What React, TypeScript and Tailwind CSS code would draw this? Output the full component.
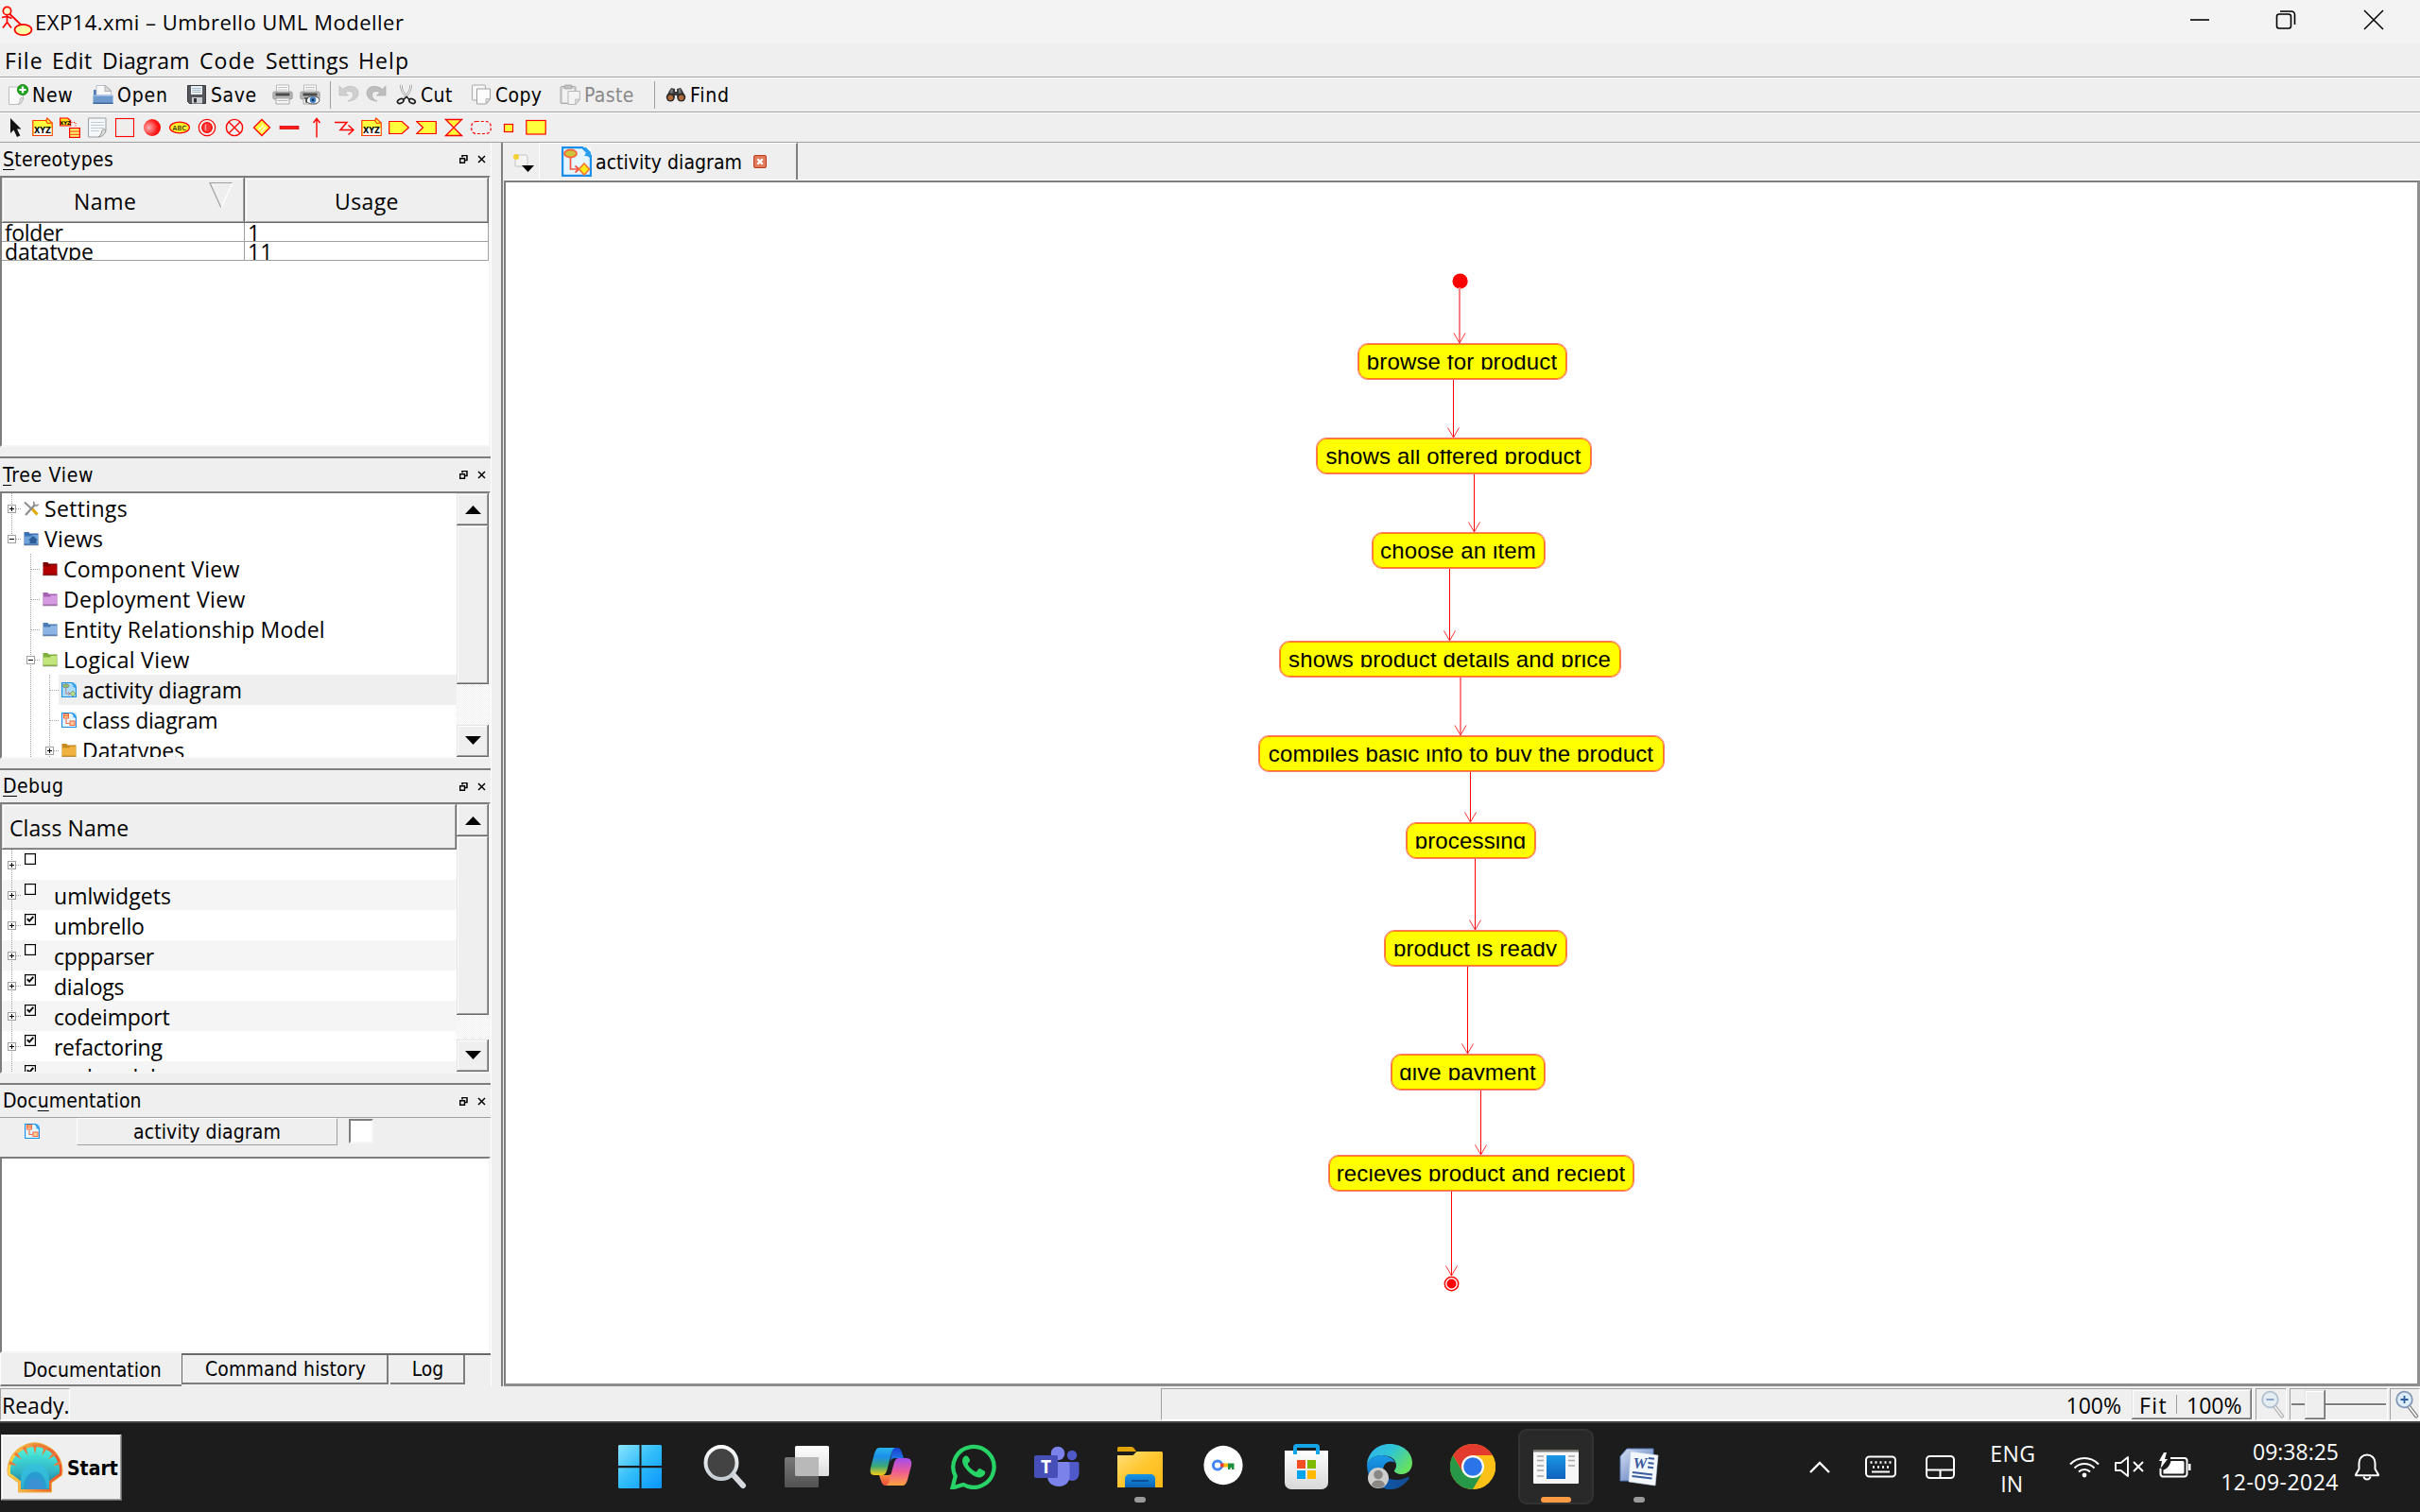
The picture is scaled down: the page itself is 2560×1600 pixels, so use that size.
import type { ReactNode } from "react";

const UI = "font-['Open_Sans','Noto_Sans',sans-serif]";
const TAHOMA = "font-['DejaVu_Sans_Condensed','DejaVu_Sans',sans-serif]";
const RAISED =
  "bg-[#efefef] shadow-[inset_-1px_-1px_0_#696969,inset_1px_1px_0_#e3e3e3,inset_-2px_-2px_0_#a0a0a0,inset_2px_2px_0_#ffffff]";
const SUNKEN =
  "border-l-2 border-t-2 border-r-2 border-b-2 border-l-[#7d7d7d] border-t-[#7d7d7d] border-r-[#f5f5f5] border-b-[#f5f5f5] bg-white";

/* ---------- toolbar icons (22 x 22) ---------- */

function Ico({ children, size = 22 }: { children: ReactNode; size?: number }) {
  return (
    <svg width={size} height={size} viewBox="0 0 22 22" className="shrink-0" fill="none">
      {children}
    </svg>
  );
}

const NewIcon = () => (
  <Ico>
    <path d="M1.500 3h15v12l-5 6.500h-10z" fill="#fafafa" stroke="#bdbdbd" />
    <path d="M16.500 15c-2-1-4 0-3.500 2 .3 2-.5 3.500-1.500 4.500 3-.5 4.500-3 5-6.500z" fill="#e2e2e2" stroke="#a8a8a8" strokeWidth=".8" />
    <circle cx="16" cy="6" r="5.600" fill="#1fa51f" stroke="#0c7d0c" strokeWidth=".8" />
    <path d="M16 2.500v7M12.500 6h7" stroke="#fff" strokeWidth="2.200" />
  </Ico>
);
const OpenIcon = () => (
  <Ico>
    <path d="M1 18V6h4v-3h2v12z" fill="#4f7db5" />
    <path d="M4 12V1.500h9.500l6 5V12z" fill="#f8f8f8" stroke="#a9b4c2" strokeWidth=".8" />
    <path d="M13 1.500v6h6.500z" fill="#dcdcdc" stroke="#9a9a9a" strokeWidth=".7" />
    <path d="M.5 12h21v8.500H.5z" fill="#6d99cc" />
    <path d="M.5 11.500h21v1.500H.5z" fill="#9dbde2" />
    <path d="M.5 19.500h21v1.500H.5z" fill="#3f699e" />
  </Ico>
);
const SaveIcon = () => (
  <Ico>
    <path d="M1.500 1.500h19v19h-17l-2-2z" fill="#56575c" stroke="#38393d" />
    <path d="M5 2h12v9H5z" fill="#e9eef2" />
    <path d="M6.500 4.500h9M6.500 6.500h9M6.500 8.500h9" stroke="#9fb4c2" strokeWidth=".9" />
    <path d="M6 14h11v6.500H6z" fill="#c9ccd0" />
    <path d="M8 15h3v4.500H8z" fill="#2f3034" />
  </Ico>
);
const PrintIcon = ({ preview = false }: { preview?: boolean }) => (
  <Ico>
    <path d="M4.500 1h13v9h-13z" fill="#fdfdfd" stroke="#aaa" strokeWidth=".8" />
    <path d="M6 3.500h10M6 6h10" stroke="#b9b9b9" strokeWidth=".9" />
    <rect x=".8" y="8" width="20.400" height="8" rx="1.500" fill="#b7b7b7" stroke="#898989" strokeWidth=".7" />
    <path d="M3.500 9.500h15v3h-15z" fill="#4b4b4b" />
    <path d="M4 15h14v6H4z" fill="#f6f6f6" stroke="#999" strokeWidth=".8" />
    <path d="M5.500 17.500h11" stroke="#bbb" />
    {preview && (
      <>
        <ellipse cx="14" cy="17" rx="7" ry="4" fill="#f8fbff" stroke="#444" strokeWidth=".9" />
        <circle cx="14" cy="16.800" r="3.300" fill="#3f7fc4" />
        <circle cx="14" cy="16.800" r="1.400" fill="#0e2c52" />
        <path d="M5 15h4M7 15v5" stroke="#222" strokeWidth="1.200" />
      </>
    )}
  </Ico>
);
const UndoIcon = ({ flip = false }: { flip?: boolean }) => (
  <Ico>
    <g transform={flip ? "translate(22 0) scale(-1 1)" : undefined}>
      <path
        d="M1 2v10h9.500l-3.500-3.200c3-2.300 8-1.800 8.500 2.200.3 3-2 5.500-5.500 7 6-.2 11-3 11-8.500 0-7.500-10-9.500-16.500-4z"
        fill={flip ? "#bdbdbd" : "#cfcfcf"}
        stroke={flip ? "#a9a9a9" : "#bcbcbc"}
        strokeWidth=".7"
      />
    </g>
  </Ico>
);
const CutIcon = () => (
  <Ico>
    <path d="M5.500 1c-.5 4 2 9 6.500 13.500M15.500 1c.5 4-2 9-6.500 13.500" stroke="#8a8a8a" strokeWidth="2.400" />
    <path d="M5.500 1c-.5 4 2 9 6.500 13.500M15.500 1c.5 4-2 9-6.500 13.500" stroke="#f3f3f3" strokeWidth="1.100" />
    <ellipse cx="4.700" cy="18" rx="3.400" ry="2.300" transform="rotate(-25 4.700 18)" stroke="#1b1b1b" strokeWidth="1.700" />
    <ellipse cx="17" cy="18" rx="3.400" ry="2.300" transform="rotate(25 17 18)" stroke="#1b1b1b" strokeWidth="1.700" />
    <path d="M8 16.500l3-3.200 3 3.200" stroke="#1b1b1b" strokeWidth="1.500" />
  </Ico>
);
const CopyIcon = () => (
  <Ico>
    <rect x="1.500" y="1" width="14" height="16" rx="1" fill="#f6f6f6" stroke="#a9a9a9" />
    <path d="M6.500 5h14v11l-4 5h-10z" fill="#fcfcfc" stroke="#a0a0a0" />
    <path d="M20.500 15.500h-4.500v5z" fill="#ddd" stroke="#aaa" strokeWidth=".7" />
  </Ico>
);
const PasteIcon = () => (
  <Ico>
    <rect x="1" y="2.500" width="16" height="18" rx="1" fill="#d3d3d3" stroke="#a8a8a8" />
    <rect x="3" y="5" width="12" height="14" fill="#f2f2f2" />
    <rect x="5" y="1" width="8" height="4" rx="1" fill="#c2c2c2" stroke="#999" strokeWidth=".7" />
    <path d="M9 7.500h12.300v9l-4 5H9z" fill="#f3f3f3" stroke="#b5b5b5" />
    <path d="M21 16h-4.500v5z" fill="#ddd" stroke="#b5b5b5" strokeWidth=".7" />
  </Ico>
);
const FindIcon = () => (
  <Ico>
    <path d="M6 4l4 1v3h2V5l4-1 2 3 3.500 7h-9l-.5-2h-2l-.5 2h-9L4 7z" fill="#3c3c3c" />
    <path d="M6 5l2 1-1 5-3 1zM15.500 5l-2 1 1 5 3 1z" fill="#7d7d7d" />
    <circle cx="5.300" cy="14" r="4.500" fill="#2b2b2b" />
    <circle cx="16.700" cy="14" r="4.500" fill="#2b2b2b" />
    <circle cx="5.300" cy="14.300" r="2.800" fill="#b26a3a" />
    <circle cx="16.700" cy="14.300" r="2.800" fill="#b26a3a" />
  </Ico>
);

const XyzIcon = () => (
  <Ico>
    <path d="M.8 3.500h14l1-2.500 5.400 5v13.500H.8z" fill="#ffff3c" stroke="#ff3a00" strokeWidth="1.200" />
    <path d="M2 11.500h18.500V19H2z" fill="#fff" />
    <path d="M14.500 3.500l2 3 4-.3" stroke="#ff3a00" strokeWidth="1.200" />
    <text x="11" y="16.800" fontSize="8.400" fontWeight="bold" textAnchor="middle" fill="#000" fontFamily="DejaVu Sans" textLength="18" lengthAdjust="spacingAndGlyphs">
      XYZ
    </text>
  </Ico>
);

const DRAW_TOOLS: ReactNode[] = [
  <Ico>
    <path d="M6 1v16l3.500-3.500L13 21l3.300-1.600L13 12.500h4.500z" fill="#111" />
  </Ico>,
  <XyzIcon />,
  <Ico>
    <path d="M.6 1h8l3 2.500V9H.6z" fill="#ffe11e" stroke="#f00" strokeWidth="1.200" />
    <text x="6" y="7.600" fontSize="5.200" fontWeight="bold" textAnchor="middle" fill="#000" fontFamily="DejaVu Sans">XYZ</text>
    <path d="M12.500 5.500h4.500v5" stroke="#f00" strokeDasharray="1 1.500" />
    <rect x="10.600" y="11.600" width="10.800" height="9.800" fill="#fff36b" stroke="#f00" strokeWidth="1.200" />
    <path d="M11 15h10M11 18.300h10" stroke="#f00" strokeWidth=".8" />
  </Ico>,
  <Ico>
    <path d="M1.500 1h18.500v12.500L12 21H1.500z" fill="#f5f7f9" stroke="#9a9fa3" />
    <path d="M4 5.500h14M4 8.500h14M4 11.500h14M4 14.500h9" stroke="#c0ccd6" />
    <path d="M20 13.500c-3-1.500-5 0-4.500 2.500-1 3-2 4-3.500 5 4 0 8-3.500 8-7.500z" fill="#dadada" stroke="#888" strokeWidth=".8" />
  </Ico>,
  <Ico>
    <rect x="1.500" y="1.500" width="19" height="19" stroke="#f00" strokeWidth="1.100" fill="#f0eded" />
  </Ico>,
  <Ico>
    <defs>
      <radialGradient id="ballGrad" cx=".3" cy=".5" r=".75">
        <stop offset="0" stopColor="#ffb0b0" />
        <stop offset=".7" stopColor="#ff1515" />
        <stop offset="1" stopColor="#f00" />
      </radialGradient>
    </defs>
    <circle cx="11" cy="11" r="9" fill="url(#ballGrad)" />
  </Ico>,
  <Ico>
    <ellipse cx="11" cy="11" rx="10.400" ry="5.800" fill="#ffee2e" stroke="#f00" strokeWidth="1.200" />
    <text x="11" y="13.600" fontSize="7" textAnchor="middle" fill="#000" fontFamily="DejaVu Sans" textLength="15">ABC</text>
  </Ico>,
  <Ico>
    <circle cx="11" cy="11" r="8.700" stroke="#f00" strokeWidth="1.200" />
    <circle cx="11" cy="11" r="5.300" fill="#ff3434" stroke="#f00" strokeWidth="1.200" />
    <path d="M9.500 7.500v7" stroke="#ff9d9d" strokeWidth="1.500" />
  </Ico>,
  <Ico>
    <circle cx="11" cy="11" r="8.600" stroke="#f00" strokeWidth="1.400" />
    <path d="M5 5l12 12M17 5L5 17" stroke="#f00" strokeWidth="1.400" />
  </Ico>,
  <Ico>
    <path d="M11 2.500l8.500 8.500L11 19.500 2.500 11z" fill="#ffff3c" stroke="#f00" strokeWidth="1.300" />
    <path d="M7.500 13.500l5-5M10 15.500l5-5" stroke="#fff" strokeWidth="1.300" />
  </Ico>,
  <Ico>
    <rect x="1" y="9.300" width="20" height="3.400" fill="#ff1a1a" stroke="#c00" strokeWidth=".6" />
  </Ico>,
  <Ico>
    <path d="M11 21.500V1.500M7.500 6L11 1.500 14.500 6" stroke="#f00" strokeWidth="1.400" />
  </Ico>,
  <Ico>
    <path d="M1 5.500h13L7 13.500h13.500M15.500 8.500l5.500 5-5.500 5" stroke="#f00" strokeWidth="1.500" />
  </Ico>,
  <XyzIcon />,
  <Ico>
    <path d="M.7 4.500h13.500L21.300 11l-7.100 6.500H.7z" fill="#ffff3c" stroke="#f00" strokeWidth="1.200" />
  </Ico>,
  <Ico>
    <path d="M.7 4.500h20.600v13H.7L7.500 11z" fill="#ffff3c" stroke="#f00" strokeWidth="1.200" />
  </Ico>,
  <Ico>
    <path d="M2.500 2.500h17L2.500 19.500h17z" fill="#ffff3c" stroke="#f00" strokeWidth="1.400" />
  </Ico>,
  <Ico>
    <rect x=".8" y="4.500" width="20.400" height="13" rx="5" stroke="#f00" strokeWidth="1.200" strokeDasharray="3 2" />
  </Ico>,
  <Ico>
    <rect x="6.500" y="7.500" width="9" height="8" fill="#ffff3c" stroke="#f00" strokeWidth="1.200" />
  </Ico>,
  <Ico>
    <rect x=".8" y="3.500" width="20.400" height="14.500" fill="#ffff3c" stroke="#f00" strokeWidth="1.200" />
  </Ico>,
];

/* ---------- window chrome ---------- */

function TitleBar() {
  return (
    <header className="flex h-[45px] shrink-0 items-center bg-[#f3f3f3]">
      <svg width="36" height="36" viewBox="0 0 36 36" fill="none" className="shrink-0">
        <path d="M10 9.500L24 23" stroke="#f00" strokeWidth="1.800" />
        <circle cx="7.500" cy="6.500" r="4.200" fill="#ffffd0" stroke="#f00" strokeWidth="1.700" />
        <path d="M7.500 11v8M2 13.500l5.500-1 5 2M7.500 18.500l-4.500 6M7.500 18.500l4.500 6" stroke="#f00" strokeWidth="1.700" />
        <ellipse cx="24.500" cy="26.500" rx="9" ry="5.600" fill="#ffffa8" stroke="#f00" strokeWidth="1.800" />
      </svg>
      <span className={`${UI} pl-px pt-[2px] text-[22px] tracking-[0.48px] text-black`}>EXP14.xmi – Umbrello UML Modeller</span>
      <svg width="208" height="24" viewBox="0 0 208 24" fill="none" stroke="#000" strokeWidth="1.600" className="-mt-[3px] mr-[37px] ml-auto">
        <path d="M2 12h20" />
        <rect x="93.500" y="6" width="15" height="15" rx="2.500" />
        <path d="M97 3h12a3.500 3.500 0 0 1 3.500 3.500V17" />
        <path d="M186 2l20 20M206 2l-20 20" strokeWidth="1.500" />
      </svg>
    </header>
  );
}

const MENUS: [string, string][] = [
  ["File", "w-[50px] tracking-[1.07px]"],
  ["Edit", "w-[53px] tracking-[0.45px]"],
  ["Diagram", "w-[103px] tracking-[0.2px]"],
  ["Code", "w-[70px] tracking-[1.07px]"],
  ["Settings", "w-[98px] tracking-[0.38px]"],
  ["Help", "w-[60px] tracking-[1.11px]"],
];

function MenuBar() {
  return (
    <nav className={`${UI} flex h-[36px] shrink-0 items-center bg-[#efefef] pl-[5px] pt-[2px] text-[23px] text-black`}>
      {MENUS.map(([label, cls]) => (
        <span key={label} className={`${cls} whitespace-nowrap`}>
          {label}
        </span>
      ))}
    </nav>
  );
}

const Sep = ({ cls }: { cls: string }) => <div className={`${cls} h-[29px] w-px shrink-0 bg-[#a0a0a0]`} />;

function MainToolbar() {
  const item = (icon: ReactNode, label: string, cls: string) => (
    <div className={`flex shrink-0 items-center gap-[4px] ${cls}`}>
      {icon}
      {label && <span className="pt-[3px]">{label}</span>}
    </div>
  );
  return (
    <div className={`${TAHOMA} flex h-[37px] shrink-0 items-center border-t border-[#a0a0a0] bg-[#efefef] pl-[8px] text-[21px] text-black shadow-[inset_0_1px_0_#fff]`}>
      {item(<NewIcon />, "New", "w-[90px] tracking-[0.77px]")}
      {item(<OpenIcon />, "Open", "w-[99px] tracking-[0.84px]")}
      {item(<SaveIcon />, "Save", "w-[91px] tracking-[0.58px]")}
      {item(<PrintIcon />, "", "w-[29px]")}
      {item(<PrintIcon preview />, "", "w-[29px]")}
      <Sep cls="ml-[3px] mr-[8px]" />
      {item(<UndoIcon />, "", "w-[29px]")}
      {item(<UndoIcon flip />, "", "w-[32px]")}
      {item(<CutIcon />, "Cut", "w-[79px] tracking-[0.41px]")}
      {item(<CopyIcon />, "Copy", "w-[94px] tracking-[0.32px]")}
      {item(<PasteIcon />, "Paste", "w-[100px] text-[#8a8a8a] tracking-[0.36px]")}
      <Sep cls="mr-[11px]" />
      {item(<FindIcon />, "Find", "tracking-[0.81px]")}
    </div>
  );
}

function DrawToolbar() {
  return (
    <div className="flex h-[33px] shrink-0 items-center gap-[7px] border-b border-t border-[#a0a0a0] bg-[#efefef] pl-[5px] shadow-[inset_0_1px_0_#fff]">
      {DRAW_TOOLS.map((icon, i) => (
        <div key={i} className="flex">
          {icon}
        </div>
      ))}
    </div>
  );
}

/* ---------- dock panels ---------- */

function DockTitle({ before = "", key1, after, cls, height = "h-[34px]" }: { before?: string; key1: string; after: string; cls: string; height?: string }) {
  return (
    <div className={`${TAHOMA} ${height} flex shrink-0 items-center pl-[3px] text-[21px] text-black`}>
      <span className={`${cls} pt-[2px]`}>
        {before}
        <span className="underline decoration-1 underline-offset-[3px]">{key1}</span>
        {after}
      </span>
      <svg width="28" height="9" viewBox="0 0 28 9" fill="none" stroke="#000" className="mr-[5px] ml-auto">
        <path d="M3 2.500V.5h5v5H6" strokeWidth="1.500" />
        <path d="M.7 3.700h4.800v4.600H.7z" strokeWidth="1.400" />
        <path d="M20 1l7 7M27 1l-7 7" strokeWidth="1.500" />
      </svg>
    </div>
  );
}

const DockSplit = () => <div className="h-[12px] shrink-0 border-b-2 border-[#7d7d7d] bg-[#efefef]" />;

function ScrollBar({ thumb }: { thumb: string }) {
  return (
    <div className="flex w-[34px] shrink-0 flex-col bg-[repeating-conic-gradient(#efefef_0_25%,#ffffff_0_50%)] bg-[length:2px_2px]">
      <div className={`${RAISED} flex h-[34px] shrink-0 items-center justify-center`}>
        <svg width="17" height="9" viewBox="0 0 17 9"><path d="M0 9L8.500 0 17 9z" fill="#000" /></svg>
      </div>
      <div className={`${RAISED} ${thumb} shrink-0`} />
      <div className={`${RAISED} mt-auto flex h-[34px] shrink-0 items-center justify-center pb-[2px]`}>
        <svg width="17" height="9" viewBox="0 0 17 9"><path d="M0 0L8.500 9 17 0z" fill="#000" /></svg>
      </div>
    </div>
  );
}

function Stereotypes() {
  return (
    <>
      <DockTitle key1="S" after="tereotypes" cls="tracking-[0.33px]" height="h-[35px]" />
      <div className={`${UI} ${SUNKEN} flex h-[287px] shrink-0 flex-col text-[23px] text-black`}>
        <div className="flex h-[48px] shrink-0">
          <div className={`${RAISED} flex w-[257px] items-center pl-[76px] pt-[2px] tracking-[0.54px]`}>
            Name
            <svg width="26" height="30" viewBox="0 0 26 30" fill="none" className="-mt-[12px] ml-[77px]">
              <path d="M25 1.500H1L13 28" stroke="#a0a0a0" strokeWidth="1.200" />
              <path d="M25 1.500L13 28" stroke="#fff" strokeWidth="1.200" />
            </svg>
          </div>
          <div className={`${RAISED} flex flex-1 items-center justify-center pt-[2px] tracking-[0.38px]`}>Usage</div>
        </div>
        {[
          ["folder", "1", "tracking-[-0.37px]"],
          ["datatype", "11", "tracking-[-0.09px]"],
        ].map(([n, u, cls]) => (
          <div key={n} className="flex h-[20px] shrink-0 overflow-hidden border-b border-[#a0a0a0] leading-[20px]">
            <div className={`${cls} w-[257px] border-r border-[#a0a0a0] pl-[3px]`}>{n}</div>
            <div className="flex-1 border-r border-[#a0a0a0] pl-[3px]">{u}</div>
          </div>
        ))}
      </div>
    </>
  );
}

/* One 20px indentation column of a tree row. */
function Branch({ line = "none", tick = false, box }: { line?: "none" | "full" | "up"; tick?: boolean; box?: "+" | "-" }) {
  return (
    <svg width="20" height="32" viewBox="0 0 20 32" className="shrink-0" fill="none" shapeRendering="crispEdges">
      {line !== "none" && <path d={line === "full" ? "M10.500 0v32" : "M10.500 0v16"} stroke="#a0a0a0" strokeDasharray="1 1" />}
      {(tick || box) && <path d="M11 16.500h9" stroke="#a0a0a0" strokeDasharray="1 1" />}
      {box && (
        <>
          <rect x="6.500" y="12.500" width="8" height="8" fill="#fff" stroke="#a0a0a0" />
          <path d="M8 16.500h5" stroke="#000" />
          {box === "+" && <path d="M10.500 14v5" stroke="#000" />}
        </>
      )}
    </svg>
  );
}

const Folder = ({ a, b, home = false }: { a: string; b: string; home?: boolean }) => (
  <svg width="16" height="16" viewBox="0 0 16 16" className="shrink-0">
    <path d="M.5 1h5l1 1.500h9V14.500H.5z" fill={b} />
    <path d="M1 5.500h7l1-1.500h6v10.500H1z" fill={a} />
    <path d="M.5 13.500h15V15H.5z" fill={b} />
    <path d="M.5 15h15" stroke="#999" strokeWidth=".6" />
    {home && <path d="M10 5l5 4.500h-1.500V13h-7V9.500H5z" fill="#2e5d96" />}
  </svg>
);
const WrenchIcon = () => (
  <svg width="16" height="16" viewBox="0 0 16 16" fill="none" className="shrink-0">
    <path d="M1 1.500l8 7.500" stroke="#888" strokeWidth="1.800" />
    <path d="M9 8.500l5.500 6" stroke="#e0a800" strokeWidth="3" />
    <path d="M2 15L12 4" stroke="#8c8c8c" strokeWidth="2.200" />
    <path d="M11 .8c-.6 2 .2 4 2 4.200 1.300.2 2-.5 2.500-1.500" stroke="#8c8c8c" strokeWidth="1.600" />
  </svg>
);

const DiagramIcon = ({ size = 16, kind = "class", tint = false }: { size?: number; kind?: "class" | "activity"; tint?: boolean }) => (
  <svg width={size} height={size} viewBox="0 0 32 32" fill="none" className="shrink-0">
    <path d="M1 1h21l9 9v21H1z" fill={tint ? "#a9dcf8" : "#e6f6ff"} stroke="#1a8fea" strokeWidth="2.400" />
    <path d="M21 1c5 2 6 6 3 9 5 0 6 2 7 4V1z" fill="#2c9ef0" />
    <path d="M26 1l5 5V1z" fill="#fff" />
    {kind === "class" ? (
      <>
        <path d="M5 3h10v9H5zM18 18h10v9H18z" fill="#ffcf9c" stroke="#f4683c" strokeWidth="2.200" />
        <path d="M10 13v10h7M5 7h10" stroke="#f4683c" strokeWidth="2.200" />
      </>
    ) : (
      <>
        <ellipse cx="9.500" cy="7.500" rx="6.500" ry="4" fill={tint ? "#8ec06a" : "#cfc53a"} stroke={tint ? "#888" : "#f4683c"} strokeWidth="1.800" />
        <path d="M9.500 12v12H18M14.500 20.500l4 3.500-4 3.500" stroke={tint ? "#c2707a" : "#f25545"} strokeWidth="1.700" />
        <path d="M24 18l5.500 6-5.500 6-5.500-6z" fill={tint ? "#b5e08c" : "#ffea1a"} stroke={tint ? "#8a9a5a" : "#f47a2c"} strokeWidth="1.700" />
      </>
    )}
  </svg>
);

const TREE: { label: string; cls: string; cells: ReactNode; icon: ReactNode; selected?: boolean }[] = [
  { label: "Settings", cls: "tracking-[0.34px]", cells: <Branch line="full" box="+" />, icon: <WrenchIcon /> },
  { label: "Views", cls: "tracking-[0.2px]", cells: <Branch line="up" box="-" />, icon: <Folder a="#6fa3dc" b="#3b70b2" home /> },
  { label: "Component View", cls: "tracking-[0.25px]", cells: <><Branch /><Branch line="full" tick /></>, icon: <Folder a="#b30000" b="#7d0000" /> },
  { label: "Deployment View", cls: "tracking-[0.33px]", cells: <><Branch /><Branch line="full" tick /></>, icon: <Folder a="#d49be0" b="#a561b5" /> },
  { label: "Entity Relationship Model", cls: "tracking-[0.17px]", cells: <><Branch /><Branch line="full" tick /></>, icon: <Folder a="#8db4e3" b="#4a7cb8" /> },
  { label: "Logical View", cls: "tracking-[0.3px]", cells: <><Branch /><Branch line="full" box="-" /></>, icon: <Folder a="#c3e57c" b="#7fae3c" /> },
  { label: "activity diagram", cls: "tracking-[-0.02px]", cells: <><Branch /><Branch line="full" /><Branch line="full" tick /></>, icon: <DiagramIcon kind="activity" tint />, selected: true },
  { label: "class diagram", cls: "tracking-[-0.22px]", cells: <><Branch /><Branch line="full" /><Branch line="full" tick /></>, icon: <DiagramIcon /> },
  { label: "Datatypes", cls: "tracking-[0px]", cells: <><Branch /><Branch line="full" /><Branch line="full" box="+" /></>, icon: <Folder a="#f0b23e" b="#c98a1c" /> },
];

function TreeView() {
  return (
    <>
      <DockTitle key1="T" after="ree View" cls="tracking-[0.71px]" height="h-[35px]" />
      <div className={`${UI} ${SUNKEN} flex h-[283px] shrink-0 overflow-hidden text-[23px] text-black`}>
        <div className="flex h-full min-w-0 flex-1 flex-col overflow-hidden">
          {TREE.map((r) => (
            <div key={r.label} className="flex h-[32px] shrink-0">
              {r.cells}
              <div className={`flex flex-1 items-center pl-[3px] ${r.selected ? "bg-[#efefef]" : ""}`}>
                {r.icon}
                <span className={`${r.cls} whitespace-nowrap pl-[6px] pt-px`}>{r.label}</span>
              </div>
            </div>
          ))}
        </div>
        <ScrollBar thumb="h-[168px]" />
      </div>
    </>
  );
}

const CLASSES: [string, boolean, string][] = [
  ["", false, ""],
  ["umlwidgets", false, "tracking-[0.05px]"],
  ["umbrello", true, "tracking-[-0.2px]"],
  ["cppparser", false, "tracking-[-0.32px]"],
  ["dialogs", true, "tracking-[-0.2px]"],
  ["codeimport", true, "tracking-[-0.2px]"],
  ["refactoring", true, "tracking-[-0.28px]"],
  ["umlmodel", true, "tracking-[-0.2px]"],
];

function DebugPanel() {
  return (
    <>
      <DockTitle key1="D" after="ebug" cls="tracking-[0.46px]" />
      <div className={`${UI} ${SUNKEN} flex h-[287px] shrink-0 overflow-hidden text-[23px] text-black`}>
        <div className="flex h-full min-w-0 flex-1 flex-col overflow-hidden">
          <div className={`${RAISED} flex h-[48px] shrink-0 items-center pl-[8px] pt-[3px] tracking-[0.1px]`}>Class Name</div>
          {CLASSES.map(([label, on, cls], i) => (
            <div key={i} className={`flex h-[32px] shrink-0 ${i % 2 ? "bg-[#f5f5f5]" : "bg-white"}`}>
              <Branch line="full" box="+" />
              <svg width="12" height="12" viewBox="0 0 12 12" fill="none" stroke="#000" className="mt-[4px] ml-[4px] shrink-0">
                <rect x=".6" y=".6" width="10.800" height="10.800" fill="#fff" strokeWidth="1.200" />
                {on && <path d="M2.800 5.200l2.300 2.400L9.300 2.800" strokeWidth="2" />}
              </svg>
              <span className={`${cls} pl-[19px] pt-px leading-[32px]`}>{label}</span>
            </div>
          ))}
        </div>
        <ScrollBar thumb="h-[189px]" />
      </div>
    </>
  );
}

function Documentation() {
  return (
    <>
      <DockTitle before="Doc" key1="u" after="mentation" cls="tracking-[0.07px]" />
      <div className={`${TAHOMA} flex h-[42px] shrink-0 items-start border-t border-[#a0a0a0] text-[21px] text-black`}>
        <div className="ml-[26px] mt-[6px] mr-[39px]">
          <DiagramIcon />
        </div>
        <div className="flex h-[29px] w-[276px] items-center justify-center border border-b-[#a0a0a0] border-l-white border-r-[#a0a0a0] border-t-white pt-[3px] tracking-[0.1px]">
          activity diagram
        </div>
        <div className={`${SUNKEN} ml-[12px] mt-px h-[26px] w-[26px]`} />
      </div>
      <div className={`${SUNKEN} h-[208px] shrink-0`} />
      <div className={`${TAHOMA} flex h-[35px] shrink-0 items-start text-[21px] text-black`}>
        <div className="flex h-[35px] w-[192px] items-center justify-center border-b-2 border-l border-b-[#7d7d7d] border-l-white pl-[2px] pt-[5px] tracking-[0.07px]">
          Documentation
        </div>
        <div className="flex h-[33px] flex-1 items-start border-l border-t-2 border-[#696969]">
          <div className="flex h-[31px] w-[218px] items-center justify-center border-b-2 border-r-2 border-[#7d7d7d] pl-[2px] pt-[3px] tracking-[0.13px]">Command history</div>
          <div className="ml-[2px] flex h-[31px] w-[79px] items-center justify-center border-b-2 border-r-2 border-[#7d7d7d] pl-[2px] pt-[3px]">Log</div>
        </div>
      </div>
    </>
  );
}

/* ---------- diagram canvas; coordinates are in window space, the canvas corner is at (535, 193) ---------- */

const OX = 535;
const OY = 193;
const NODES: [string, number, number, number][] = [
  ["browse for product", 1435.5, 363, 222],
  ["shows all offered product", 1391.5, 463, 292],
  ["choose an item", 1450.5, 563, 184],
  ["shows product details and price", 1352.5, 678, 362],
  ["compiles basic info to buy the product", 1330.5, 778, 430],
  ["processing", 1486.5, 870, 138],
  ["product is ready", 1463.5, 984, 194],
  ["give payment", 1470.5, 1115, 164],
  ["recieves product and reciept", 1404.5, 1222, 324],
];
const EDGES: [number, number, number, boolean][] = [
  [1544, 304, 363, true],
  [1537.5, 402, 463, false],
  [1559.5, 502, 563, false],
  [1533.5, 602, 678, false],
  [1545, 717, 778, true],
  [1555.5, 817, 870, false],
  [1560.5, 909, 984, false],
  [1552.5, 1023, 1115, false],
  [1566.5, 1154, 1222, false],
  [1535.5, 1261, 1350, false],
];

function Canvas() {
  return (
    <div className="relative flex-1 overflow-hidden bg-white">
      <svg width="2021" height="1270" viewBox="535 193 2021 1270" className="absolute left-0 top-0" fill="none">
        <circle cx="1544.600" cy="297.500" r="8.100" fill="#f00" />
        {EDGES.map(([x, a, b, soft]) => (
          <g key={a}>
            <path d={`M${x} ${a}V${b}`} stroke={soft ? "#ff8080" : "#f00"} strokeWidth={soft ? 2 : 1} />
            <path d={`M${x - 6} ${b - 10.5}L${x} ${b}L${x + 6} ${b - 10.5}`} stroke="#f33" strokeWidth="1" />
          </g>
        ))}
        <circle cx="1535.500" cy="1358.500" r="7.200" fill="#fff" stroke="#f00" strokeWidth="1.500" />
        <circle cx="1535.500" cy="1358.500" r="5" fill="#f00" />
      </svg>
      {NODES.map(([label, x, y, w]) => (
        <div key={label} className="absolute h-[39px] rounded-[11px] border border-[#ff7878]" style={{ left: x - OX, top: y - OY, width: w }}>
          <div className="flex h-full items-start justify-center rounded-[10px] border border-[#ff8000] bg-[#ffff00] pt-[11px]">
            <div className="h-[15px] overflow-hidden whitespace-nowrap font-['Liberation_Sans',Arial,sans-serif] text-[24px] leading-[13px] tracking-[0.15px] text-black">
              {label}
            </div>
          </div>
        </div>
      ))}
    </div>
  );
}

function Central() {
  return (
    <main className="flex min-w-0 flex-1 flex-col border-l-2 border-[#7d7d7d] border-l-[#808080] bg-[#efefef]">
      <div className={`${TAHOMA} flex h-[39px] shrink-0 text-[21px] text-black`}>
        <svg width="25" height="22" viewBox="0 0 25 22" fill="none" className="ml-[10px] mt-[11px] mr-[3px] shrink-0">
          <path d="M4 2h10a2 2 0 0 1 2 2v10H3V7" fill="#f4f4f4" stroke="#c4c4c4" />
          <circle cx="4" cy="4" r="3" fill="#f7cf38" />
          <path d="M10 13h13l-6.500 7z" fill="#000" />
        </svg>
        <div className="flex w-[274px] items-center border-l border-r-2 border-t border-l-white border-r-[#808080] border-t-white pl-[23px]">
          <DiagramIcon size={32} kind="activity" />
          <span className="pl-[4px] pt-[3px] tracking-[0.05px]">activity diagram</span>
          <svg width="14" height="14" viewBox="0 0 14 14" className="ml-[12px]">
            <rect x=".5" y=".5" width="13" height="13" rx="1.500" fill="#df7a5b" stroke="#c0391f" />
            <path d="M4.300 4.300l5.400 5.400M9.700 4.300L4.300 9.700" stroke="#fff" strokeWidth="2.300" />
          </svg>
        </div>
      </div>
      <div className="ml-[1px] flex min-h-0 flex-1 flex-col border-t border-white">
        <div className="flex min-h-0 flex-1 flex-col border-b-[3px] border-l-2 border-r-[3px] border-t-2 border-[#7d7d7d] border-b-[#8c8c8c] border-r-[#909090]">
          <Canvas />
        </div>
      </div>
    </main>
  );
}

function Magnifier({ plus = false }: { plus?: boolean }) {
  return (
    <svg width="26" height="30" viewBox="0 0 26 30" fill="none" opacity={plus ? 1 : 0.55} className="ml-[2px] shrink-0">
      <path d="M15 17l8 10.500" stroke="#777" strokeWidth="4" strokeLinecap="round" />
      <path d="M15 17l8 10.500" stroke="#f2f2f2" strokeWidth="2" strokeLinecap="round" />
      <circle cx="10.500" cy="10" r="8.300" fill="#dcecf8" stroke="#8298b4" strokeWidth="1.800" />
      <path d={plus ? "M6.500 10h8M10.500 6v8" : "M6.500 10h8"} stroke="#2c5c9c" strokeWidth="1.800" />
    </svg>
  );
}

function StatusBar() {
  const well = "border border-b-white border-l-[#a0a0a0] border-r-white border-t-[#a0a0a0]";
  return (
    <footer className={`${UI} flex h-[37px] shrink-0 items-start bg-[#efefef] pt-[2px] text-[23px] text-black`}>
      <div className={`${well} flex h-[34px] w-[74px] items-center pt-[2px] pl-px`}>Ready.</div>
      <div className={`${well} ml-[1154px] flex h-[34px] w-[1155px] items-center justify-end`}>
        <span className="mr-[11px] pt-[3px]">100%</span>
        <div className={`${RAISED} flex h-[32px] w-[127px] items-center pl-[8px]`}>
          <span className="w-[39px] pt-[3px] tracking-[1.4px]">Fit</span>
          <div className="mr-[10px] h-[20px] w-px bg-[#a0a0a0]" />
          <span className="pt-[3px]">100%</span>
        </div>
      </div>
      <div className={`${well} ml-[3px] flex h-[34px] w-[33px] items-center justify-center`}>
        <Magnifier />
      </div>
      <div className={`${well} ml-[3px] flex h-[34px] w-[104px] items-center px-px`}>
        <div className="h-[2px] w-[14px] border-t-2 border-[#7d7d7d]" />
        <div className={`${RAISED} h-[31px] w-[22px]`} />
        <div className="h-[3px] flex-1 border-b border-t-2 border-b-white border-t-[#7d7d7d]" />
      </div>
      <div className={`${well} ml-[2px] flex h-[34px] flex-1 items-center pl-[2px]`}>
        <Magnifier plus />
      </div>
    </footer>
  );
}

/* ---------- taskbar ---------- */

function Slot({ children, active = false, dot = false }: { children: ReactNode; active?: boolean; dot?: boolean }) {
  return (
    <div className="flex w-[88px] shrink-0 items-start justify-center pt-[6px]">
      <div className={`relative flex h-[80px] w-[80px] items-center justify-center rounded-[9px] ${active ? "border-2 border-[#333] bg-[#292929]" : ""}`}>
        {children}
        {dot && <div className="absolute bottom-[2px] h-[6px] w-[12px] rounded-full bg-[#999]" />}
        {active && <div className="absolute bottom-0 h-[6px] w-[32px] rounded-full bg-[#fb9b44]" />}
      </div>
    </div>
  );
}

const T = ({ children, w = 48, h = 48, cls = "" }: { children: ReactNode; w?: number; h?: number; cls?: string }) => (
  <svg width={w} height={h} viewBox={`0 0 ${w} ${h}`} fill="none" className={cls}>
    {children}
  </svg>
);

function Grad({ id, stops, x2 = 0, y2 = 1 }: { id: string; stops: string[]; x2?: number; y2?: number }) {
  return (
    <linearGradient id={id} x1="0" y1="0" x2={x2} y2={y2}>
      {stops.map((c, i) => (
        <stop key={i} offset={i / (stops.length - 1)} stopColor={c} />
      ))}
    </linearGradient>
  );
}

function TaskIcons() {
  return (
    <div className="ml-[505px] flex">
      <Slot>
        <T cls="mr-[3px]">
          <defs><Grad id="win" stops={["#8be4ff", "#2fbcf9", "#0a95fa"]} x2={1} /></defs>
          <path d="M2 1h21.500v22H1V2zM25.500 1H46l1 1v21H25.500zM1 25.200h22.500V47H2l-1-1zM25.500 25.200H47V46l-1 1H25.500z" fill="url(#win)" />
        </T>
      </Slot>
      <Slot>
        <T cls="mr-px">
          <defs><Grad id="mag" stops={["#ffffff", "#c4cdd4"]} /></defs>
          <path d="M34 33l10 11" stroke="#d6dade" strokeWidth="6" strokeLinecap="round" />
          <ellipse cx="21" cy="20" rx="16.500" ry="17" fill="#434343" stroke="url(#mag)" strokeWidth="4" />
        </T>
      </Slot>
      <Slot>
        <T>
          <defs><Grad id="tv1" stops={["#ffffff", "#dcdcdc"]} /><Grad id="tv2" stops={["#777777", "#525252"]} /></defs>
          <rect x="11" y="2" width="36" height="32" rx="1.500" fill="url(#tv1)" />
          <rect x="0" y="14" width="36" height="32" rx="1.500" fill="url(#tv2)" />
          <path d="M11 14h25v20H12.500a1.500 1.500 0 0 1-1.500-1.500z" fill="#b9b9b9" />
        </T>
      </Slot>
      <Slot>
        <T>
          <defs>
            <Grad id="cp1" stops={["#27b4ee", "#1c8fe8", "#3aa878", "#f7cc12"]} />
            <Grad id="cp2" stops={["#a24df0", "#ee5c95", "#fda43c"]} />
            <Grad id="cp3" stops={["#1a3fd0", "#1f86ec"]} />
            <Grad id="cp4" stops={["#f9a13e", "#ee4b3f"]} />
          </defs>
          <path d="M26 4h5c3 0 4 2 5 5l2 6h-9c-3 0-4 1-5 4z" fill="url(#cp3)" />
          <path d="M22 44h-3c-3 0-4-2-5-5l-2-6h9c3 0 4-1 5-4z" fill="url(#cp4)" />
          <path d="M12 4h17c-3 1-3.500 4-4.500 8l-4 15c-1.500 5-3 6-6 6H7c-4 0-5-3-4-8l4-15c1.500-4 2.500-6 5-6z" fill="url(#cp1)" />
          <path d="M36 44H19c3-1 3.500-4 4.500-8l4-15c1.500-5 3-6 6-6H41c4 0 6 3 5 8l-4 15c-1.500 4-2.500 6-6 6z" fill="url(#cp2)" />
        </T>
      </Slot>
      <Slot>
        <T w={50}>
          <path d="M2.500 46.500l3.200-12.400A21.600 21.500 0 1 1 14.200 43z" stroke="#27d366" strokeWidth="4.300" strokeLinejoin="miter" />
          <path d="M17.500 12.500c-1-.3-2 0-3 1.200-3 3.800-1.300 8.300 3.500 14 5 5.500 10.500 8.600 14.700 7.500 3-.8 4.800-3 4.500-5.700-.2-.6-5-3.400-6-3.400-1.500 0-2.500 3.500-3.700 3.500-1.700 0-8.700-6-8.700-8.300 0-1.300 2.300-2.300 2.300-4 0-.8-2-4.500-3.600-4.800z" fill="#27d366" />
        </T>
      </Slot>
      <Slot>
        <T>
          <circle cx="25" cy="10" r="7.300" fill="#7b83eb" />
          <circle cx="40" cy="12" r="5.200" fill="#5059c9" />
          <path d="M33 19h13a1.500 1.500 0 0 1 1.500 1.500V31c0 5-3.500 8-7.500 8s-7-3-7-7z" fill="#5059c9" />
          <path d="M16 19h20a1.500 1.500 0 0 1 1.500 1.500V34c0 7-5 11-11.500 11S14 41 14 34z" fill="#7b83eb" />
          <rect x="0" y="12" width="25" height="24" rx="2" fill="#464eb8" />
          <text x="12.500" y="31" fontSize="19" fontWeight="bold" fill="#fff" textAnchor="middle" fontFamily="Open Sans">T</text>
        </T>
      </Slot>
      <Slot dot>
        <T>
          <defs><Grad id="fol" stops={["#ffe07a", "#ffc62e", "#fbb616"]} x2={1} /><Grad id="fb" stops={["#1795e6", "#0b62b4"]} /></defs>
          <path d="M0 4.500A1.500 1.500 0 0 1 1.500 3H14c2 0 3 .5 4 2l2 3H0z" fill="#e2a305" />
          <path d="M0 12h16c2 0 3-4 5-4h25.500A1.500 1.500 0 0 1 48 9.500V46H0z" fill="url(#fol)" />
          <path d="M8 46V37c0-3 2-5 5-5h22c3 0 5 2 5 5v9z" fill="url(#fb)" />
          <path d="M15 39h18" stroke="#0a4f98" strokeWidth="2" />
        </T>
      </Slot>
      <Slot>
        <T>
          <ellipse cx="24" cy="22.500" rx="20.600" ry="20.700" fill="#fff" />
          <circle cx="18" cy="22.500" r="4.600" stroke="#4285f4" strokeWidth="3" />
          <path d="M21 20.500h4v4h-4z" fill="#ea4335" />
          <path d="M24.500 20.500h5v4h-5z" fill="#fbbc04" />
          <path d="M29 20.500h6.500v6.500h-2.500v-2h-1.500v2H29z" fill="#1e8e3e" />
        </T>
      </Slot>
      <Slot>
        <T>
          <defs><Grad id="st" stops={["#ffffff", "#d8d8d8"]} /></defs>
          <path d="M1 7h46v34a7 7 0 0 1-7 7H8a7 7 0 0 1-7-7z" fill="url(#st)" />
          <path d="M12 11V3.500A1.500 1.500 0 0 1 13.500 2h21A1.500 1.500 0 0 1 36 3.500V11" stroke="#13a5e8" strokeWidth="4" />
          <path d="M14 17h9v9h-9z" fill="#f25022" />
          <path d="M25 17h9v9h-9z" fill="#7fba00" />
          <path d="M14 28h9v9h-9z" fill="#00a4ef" />
          <path d="M25 28h9v9h-9z" fill="#ffb900" />
        </T>
      </Slot>
      <Slot>
        <T>
          <defs>
            <Grad id="eg1" stops={["#30aef0", "#2fc5d4", "#66e060"]} x2={1} y2={0.6} />
            <Grad id="eg2" stops={["#1a9be8", "#0b62b8"]} />
            <Grad id="eg3" stops={["#0d58a8", "#144b92"]} x2={1} y2={0} />
          </defs>
          <path d="M24 0c14 0 24 9 24 20 0 7-5 12-11 12-5 0-8-2-8-3.500s2-2 2-6C31 16 24 12 16 12 8 12 2 16 0 22 1 10 10 0 24 0z" fill="url(#eg1)" />
          <path d="M0 22c2-6 8-10 15-10 7 0 13 3 15 8-6-4-13 0-13 8 0 8 5 15 12 18-4 2-8 2-10 1C8 45 0 35 0 22z" fill="url(#eg2)" />
          <path d="M17 27c0 7 6 11 14 11 5 0 10-2 12-3 2-.5 2.500.500 1 2.500C40 43 33 48 25 48c-2 0-4-.3-5-1-3-3-5-12-3-20z" fill="url(#eg3)" />
          <ellipse cx="12" cy="36" rx="11" ry="11" fill="#cfcdcb" />
          <circle cx="12" cy="32.500" r="4.800" fill="#8a8785" />
          <path d="M5 43.500c1-4 4-5 7-5s6 1 7 5c-4 4-10 4-14 0z" fill="#8a8785" />
        </T>
      </Slot>
      <Slot>
        <T>
          <circle cx="24" cy="24" r="24" fill="#f9bc15" />
          <path d="M24 12h20.800A24 24 0 0 1 24 48l10.400-18z" fill="#fbc116" />
          <path d="M3.200 12A24 24 0 0 0 24 48l10.400-18H13.600z" fill="#279847" />
          <path d="M3.200 12A24 24 0 0 1 44.800 12H24L13.600 30z" fill="#e33b2e" />
          <circle cx="24" cy="24" r="12" fill="#fff" />
          <circle cx="24" cy="24" r="9.800" fill="#2b74ea" />
        </T>
      </Slot>
      <Slot active>
        <T>
          <defs><Grad id="ap" stops={["#1c97e6", "#0e62bc"]} /></defs>
          <rect x="0" y="6" width="48" height="36" rx="1" fill="#f6f6f6" />
          <path d="M0 6h48v2.500H0z" fill="#7c7874" />
          <path d="M14 12h20v25H14z" fill="url(#ap)" />
          <path d="M4 13h7M4 17.500h7M4 23h7M4 28h7M4 34h7M37 13h7M37 17.500h7M37 23h7" stroke="#a5a5a5" strokeWidth="1.400" />
        </T>
      </Slot>
      <Slot dot>
        <T>
          <defs><Grad id="wd" stops={["#d6e0f2", "#4a6db5"]} x2={1} /></defs>
          <path d="M11 5h28v34H4V13z" fill="url(#wd)" stroke="#5576b5" />
          <path d="M15 8l29 4-3 32-28-4z" fill="#f2f8fd" stroke="#c9d8e8" strokeWidth=".6" />
          <text x="17.500" y="26" fontSize="17" fontWeight="bold" fontStyle="italic" fill="#3a5a9e" fontFamily="Liberation Serif" textLength="15" lengthAdjust="spacingAndGlyphs">W</text>
          <path d="M34 15l6 .8M33.500 20l6 .8M33 24.500l6 .8M17 30l21 2.500M16.500 34l21 2.500" stroke="#3a5a9e" strokeWidth="2" />
        </T>
      </Slot>
    </div>
  );
}

function Shell() {
  const ribs = [-66, -44, -22, 0, 22, 44, 66];
  return (
    <svg width="60" height="54" viewBox="0 0 60 54" fill="none">
      <defs>
        <Grad id="shBorder" stops={["#ffd94a", "#f08a3c", "#e8502c"]} x2={1} y2={0} />
        <Grad id="shFill" stops={["#53f0dc", "#35c7c9", "#116a80"]} />
        <Grad id="shIn" stops={["#3fdcd6", "#35b3c4", "#126f86"]} />
      </defs>
      <path d="M12.500 53v-10L1.500 35C-1 23 6 9 17 4.500c8-5 18-5 26 0 11 4.500 18 18.500 15.500 30.500L47.500 43v10z" fill="url(#shBorder)" stroke="#f0b040" />
      <path d="M15 49.500V41L4 33C3 22 9 12 18 8c8-4 16-4 24 0 9 4 15 14 14 25L45 41v8.500z" fill="url(#shFill)" />
      {ribs.map((r) => (
        <path key={r} d="M28 3h4L30 13z" fill="#ec7a3a" transform={`rotate(${r * 1.05} 30 32)`} />
      ))}
      <path d="M15 49.500V41L7 34c1-12 10-20 23-20s22 8 23 20l-8 7v8.500z" fill="url(#shIn)" />
      <path d="M15 49.500V38c1-9 7-15 15-15s14 6 15 15v11.500z" fill="#35bfe0" opacity=".8" />
      <path d="M18 49.500c0-11 5-18 12-18s12 7 12 18z" fill="#2a9bd0" />
      <path d="M22 49.500c0-7 3-11 8-11s8 4 8 11z" fill="#3c90d4" />
    </svg>
  );
}

function Tray() {
  return (
    <div className={`${UI} ml-auto flex items-center pb-[2px] text-[23px] text-white`}>
      <svg width="22" height="13" viewBox="0 0 22 13" fill="none" className="mr-[37px]">
        <path d="M1 12L11 2l10 10" stroke="#fff" strokeWidth="2.300" />
      </svg>
      <svg width="33" height="24" viewBox="0 0 33 24" fill="none" className="mr-[31px]">
        <rect x="1" y="1.500" width="31" height="21" rx="3.500" stroke="#fff" strokeWidth="2" />
        <path d="M5.500 7.500h2M10.500 7.500h2M15.500 7.500h2M20.500 7.500h2M25.500 7.500h2M8 12.500h2M13 12.500h2M18 12.500h2M23 12.500h2" stroke="#fff" strokeWidth="2.300" />
        <path d="M7 17.500h19" stroke="#fff" strokeWidth="2" />
      </svg>
      <svg width="31" height="25" viewBox="0 0 31 25" fill="none" className="mr-[37px]">
        <rect x="1" y="1" width="29" height="23" rx="3.500" stroke="#fff" strokeWidth="2" />
        <path d="M1 15.500h29M15.500 15.500V24" stroke="#fff" strokeWidth="2" />
      </svg>
      <div className="mr-[38px] mt-[3px] w-[46px] text-center leading-[32px]">
        <div className="tracking-[0.5px]">ENG</div>
        <div>IN</div>
      </div>
      <svg width="32" height="23" viewBox="0 0 32 23" fill="none" stroke="#fff" strokeWidth="2" className="mr-[16px]">
        <path d="M1 8.500a20.500 20.500 0 0 1 30 0M5.500 12.500a14.500 14.500 0 0 1 21 0M10 16.500a8.300 8.300 0 0 1 12 0" />
        <circle cx="16" cy="20" r="2.400" fill="#fff" stroke="none" />
      </svg>
      <svg width="32" height="24" viewBox="0 0 32 24" fill="none" stroke="#fff" strokeWidth="1.900" className="mr-[15px]">
        <path d="M1 8h5.500L14 2v20l-7.500-6H1z" strokeLinejoin="round" />
        <path d="M20 7l10 10M30 7L20 17" />
      </svg>
      <svg width="34" height="28" viewBox="0 0 34 28" fill="none" className="mb-[3px] mr-[31px]">
        <path d="M12 6h15a2.500 2.500 0 0 1 2.500 2.500v14A3 3 0 0 1 27 25.500H4.500A3 3 0 0 1 1.500 22.500V17" stroke="#fff" strokeWidth="2" />
        <path d="M12.500 9H25a1.500 1.500 0 0 1 1.500 1.500v10.500a1.500 1.500 0 0 1-1.500 1.500H4.500V18.500c4-1 7-5 8-9.500z" fill="#fff" />
        <path d="M31 12h2.500v7H31z" fill="#fff" />
        <path d="M5 0L0 9h3l-1.500 8L9 7H6l2-7z" fill="#fff" />
      </svg>
      <div className="mr-[16px] text-right leading-[32px]">
        <div>09:38:25</div>
        <div className="tracking-[0.48px]">12-09-2024</div>
      </div>
      <svg width="28" height="29" viewBox="0 0 28 29" fill="none" stroke="#fff" strokeWidth="2" className="mr-[42px]">
        <path d="M14 1.500c-5 0-8.500 3.800-8.500 8.500v6.500L2 22.500v.8h24v-.8l-3.500-6V10c0-4.700-3.500-8.500-8.500-8.500z" strokeLinejoin="round" />
        <path d="M10.500 24.500c.5 2 2 3 3.500 3s3-1 3.500-3" />
      </svg>
    </div>
  );
}

function Taskbar() {
  return (
    <div className="flex h-[96px] shrink-0 border-t-2 border-[#404040] bg-[#1c1c1c]">
      <div className={`${RAISED} ml-[1px] mt-[12px] flex h-[70px] w-[128px] shrink-0 items-center pl-[6px]`}>
        <Shell />
        <span className={`${TAHOMA} pl-[4px] pt-[4px] text-[21px] font-bold text-black`}>Start</span>
      </div>
      <TaskIcons />
      <Tray />
    </div>
  );
}

export default function App() {
  return (
    <div className="flex h-[1600px] w-[2560px] flex-col overflow-hidden bg-[#efefef]">
      <TitleBar />
      <MenuBar />
      <MainToolbar />
      <DrawToolbar />
      <div className="flex h-[1316px] shrink-0">
        <aside className="flex w-[520px] shrink-0 flex-col border-r border-white">
          <Stereotypes />
          <DockSplit />
          <TreeView />
          <DockSplit />
          <DebugPanel />
          <DockSplit />
          <Documentation />
        </aside>
        <div className="w-[10px] shrink-0" />
        <Central />
      </div>
      <StatusBar />
      <Taskbar />
    </div>
  );
}
